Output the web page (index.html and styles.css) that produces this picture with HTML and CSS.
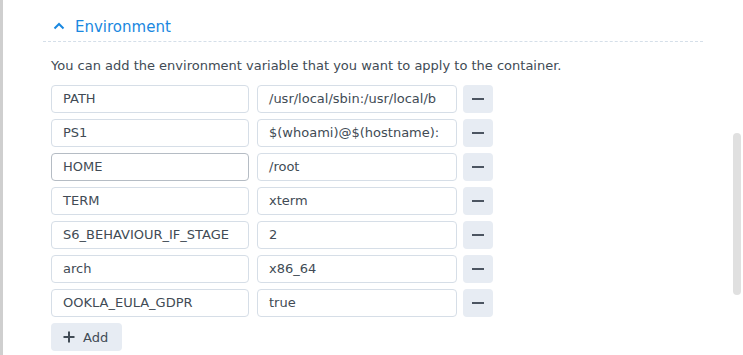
FILE: index.html
```html
<!DOCTYPE html>
<html lang="en">

<head>
    <meta charset="UTF-8">
    <meta name="viewport" content="width=device-width, initial-scale=1.0">
    <title>Environment</title>
    <link rel="stylesheet" href="styles.css">
</head>

<body>
    <div class="window">
        <div class="edge"></div>
        <div class="panel">
            <div class="section-head">
                <svg class="chevron" width="12" height="8" viewBox="0 0 12 8">
                    <path d="M1.5 6.5 L6 2 L10.5 6.5" fill="none" stroke="#1a88e0" stroke-width="2" />
                </svg>
                <span>Environment</span>
            </div>
            <div class="section-body">
                <p class="hint">You can add the environment variable that you want to apply to the container.</p>

                <div class="env-row">
                    <div class="field">PATH</div>
                    <div class="field value">/usr/local/sbin:/usr/local/b</div>
                    <button class="remove"><span class="dash"></span></button>
                </div>
                <div class="env-row">
                    <div class="field">PS1</div>
                    <div class="field value">$(whoami)@$(hostname):</div>
                    <button class="remove"><span class="dash"></span></button>
                </div>
                <div class="env-row">
                    <div class="field hover">HOME</div>
                    <div class="field value">/root</div>
                    <button class="remove"><span class="dash"></span></button>
                </div>
                <div class="env-row">
                    <div class="field">TERM</div>
                    <div class="field value">xterm</div>
                    <button class="remove"><span class="dash"></span></button>
                </div>
                <div class="env-row">
                    <div class="field">S6_BEHAVIOUR_IF_STAGE</div>
                    <div class="field value">2</div>
                    <button class="remove"><span class="dash"></span></button>
                </div>
                <div class="env-row">
                    <div class="field">arch</div>
                    <div class="field value">x86_64</div>
                    <button class="remove"><span class="dash"></span></button>
                </div>
                <div class="env-row">
                    <div class="field">OOKLA_EULA_GDPR</div>
                    <div class="field value">true</div>
                    <button class="remove"><span class="dash"></span></button>
                </div>

                <button class="add-btn">
                    <svg width="12" height="12" viewBox="0 0 12 12">
                        <path d="M6 0.5 V11.5 M0.5 6 H11.5" stroke="#414b55" stroke-width="2" />
                    </svg>
                    <span>Add</span>
                </button>
            </div>
        </div>
        <div class="scroll-track">
            <div class="scroll-thumb"></div>
        </div>
    </div>
</body>

</html>
```

FILE: styles.css
```css
body {
    margin: 0;
    padding: 0;
    background: #fff;
    font-family: 'DejaVu Sans', Verdana, sans-serif;
    color: #414b55;
    overflow: hidden;
}

.window {
    display: flex;
    height: 355px;
}

.edge {
    width: 3px;
    background: #cfcfcf;
    flex-shrink: 0;
}

.panel {
    width: 660px;
    padding-left: 40px;
    flex-shrink: 0;
}

.section-head {
    display: flex;
    align-items: center;
    gap: 10px;
    height: 42px;
    padding: 12px 10px 0;
    box-sizing: border-box;
    border-bottom: 1px dashed #d5dfe9;
    color: #1a88e0;
    font-size: 15px;
}

.chevron {
    margin-top: -2px;
}

.section-body {
    padding: 0 8px;
}

.hint {
    margin: 15px 0 11px;
    font-size: 13px;
    line-height: 17px;
}

.env-row {
    display: flex;
    gap: 8px;
    margin-bottom: 6px;
}

.field {
    width: 198px;
    height: 28px;
    box-sizing: border-box;
    border: 1px solid #d6dee7;
    border-radius: 4px;
    padding: 0 11px;
    font-size: 13px;
    line-height: 26px;
    white-space: nowrap;
    overflow: hidden;
}

.field.value {
    width: 200px;
}

.field.hover {
    border-color: #b5bcc4;
}

.remove {
    width: 30px;
    height: 28px;
    margin-left: -2px;
    border: none;
    border-radius: 4px;
    background: #e7ecf3;
    display: flex;
    align-items: center;
    justify-content: center;
    padding: 0;
}

.dash {
    width: 12px;
    height: 2px;
    background: #4c5561;
}

.add-btn {
    display: flex;
    align-items: center;
    gap: 8px;
    height: 28px;
    margin-top: 0;
    padding: 0 14px 0 12px;
    border: none;
    border-radius: 4px;
    background: #e7ecf3;
    color: #414b55;
    font-family: 'DejaVu Sans', Verdana, sans-serif;
    font-size: 13px;
}

.scroll-track {
    flex: 1;
    display: flex;
    justify-content: flex-end;
    padding-right: 2px;
}

.scroll-thumb {
    width: 8px;
    height: 162px;
    margin-top: 133px;
    border-radius: 4px;
    background: #e0e0e0;
}
```
